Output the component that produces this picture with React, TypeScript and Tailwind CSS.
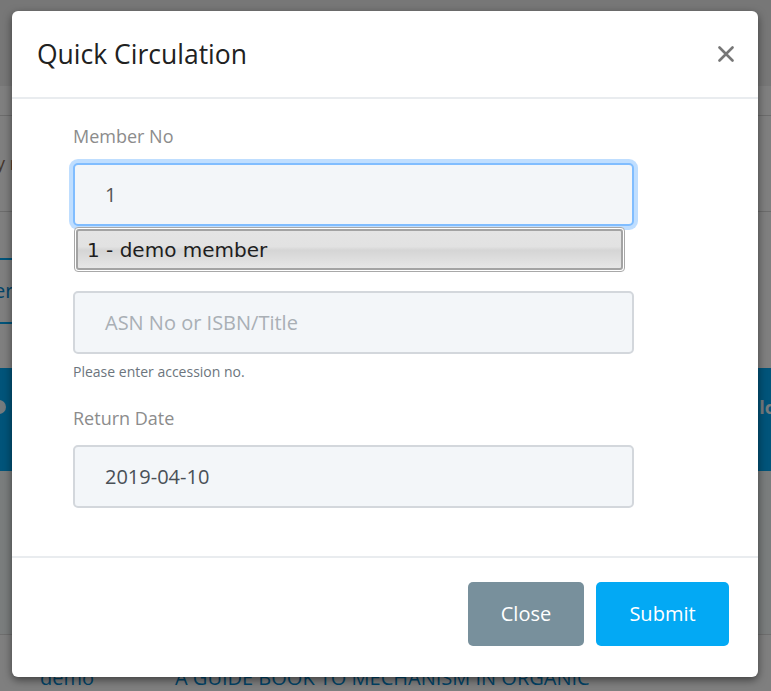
export default function App() {
  return (
    <div className="relative h-[691px] w-[771px] overflow-hidden bg-white font-['Open_Sans',sans-serif]">
      {/* page behind the dialog */}
      <div className="h-[86px] bg-[#eeeeee]" />
      <div className="h-[30px] border-b border-[#d8d8d8]" />
      <div className="flex h-[96px] items-center border-b border-[#d8d8d8]">
        <span className="-ml-[4px] text-[18px] text-[#8a6d5a]">y r</span>
      </div>
      <div className="h-[46px]" />
      <div className="w-[36px] border-y-2 border-[#03a9f4] py-[16px]">
        <span className="-ml-[6px] text-[20px] text-[#0288d1]">er</span>
      </div>
      <div className="h-[44px]" />
      <div className="flex h-[103px] items-start justify-between bg-[#03a9f4] pt-[26px] text-[18px] font-bold text-[#eaf6fd]">
        <span className="-ml-[8px] mt-[6px] h-[14px] w-[14px] rounded-full bg-[#eaf6fd]" />
        <span className="-mr-[5px]">lo</span>
      </div>
      <div className="h-[164px] border-b border-[#dcdcdc] bg-[#f4fafa]" />
      <div className="flex pl-[40px] pt-[28px] text-[20px] uppercase text-[#0288d1]">
        <span className="w-[135px] normal-case">demo</span>
        <span>A guide book to mechanism in organic</span>
      </div>

      {/* backdrop */}
      <div className="absolute inset-0 bg-black/50" />

      {/* dialog */}
      <div className="absolute left-[12px] top-[11px] w-[746px] rounded-[6px] bg-white shadow-[0_3px_9px_rgba(0,0,0,0.5)]">
        <div className="flex h-[88px] items-center justify-between border-b-2 border-[#e9ecef] px-[25px]">
          <h1 className="text-[26.5px] leading-none text-[#212121]">Quick Circulation</h1>
          <svg width="16" height="16" viewBox="0 0 16 16" className="mr-[-1px]">
            <path d="M1.5 1.5L14.5 14.5M14.5 1.5L1.5 14.5" stroke="#777" strokeWidth="2.6" strokeLinecap="round" />
          </svg>
        </div>

        <div className="px-[61px] pb-[48px] pt-[24px]">
          <label className="block text-[18px] leading-[27px] text-[#8c8c8c]">Member No</label>
          <div className="relative mt-[13px] w-[561px]">
            <div className="flex h-[63px] items-center rounded-[5px] border-2 border-[#80bdff] bg-[#f3f6f9] pl-[30px] text-[20px] text-[#555] shadow-[0_0_0_4px_rgba(0,123,255,0.25)]">
              1
            </div>
            <div className="absolute left-[1px] top-[64px] w-[551px] rounded-[4px] border border-[#a8a8a8] bg-white p-px">
              <div className="flex h-[41px] items-center rounded-[3px] border-2 border-[#a3a3a3] bg-[linear-gradient(to_bottom,#e4e4e4_0%,#e2e2e2_42%,#d5d5d5_52%,#e6e6e6_100%)] pl-[9px] font-['DejaVu_Sans',sans-serif] text-[20px] text-[#1e1e1e]">
                1 - demo member
              </div>
            </div>
          </div>

          <div className="mt-[65px] flex h-[63px] w-[561px] items-center rounded-[5px] border-2 border-[#d3d7dc] bg-[#f3f6f9] pl-[30px] text-[20px] text-[#a9afb5]">
            ASN No or ISBN/Title
          </div>
          <p className="mt-[7px] text-[14px] leading-[21px] text-[#6c757d]">Please enter accession no.</p>

          <label className="mt-[23px] block text-[18px] leading-[27px] text-[#8c8c8c]">Return Date</label>
          <div className="mt-[13px] flex h-[63px] w-[561px] items-center rounded-[5px] border-2 border-[#d3d7dc] bg-[#f3f6f9] pl-[30px] text-[20px] text-[#495057]">
            2019-04-10
          </div>
        </div>

        <div className="flex justify-end gap-[12px] border-t-2 border-[#e9ecef] pb-[31px] pr-[29px] pt-[24px]">
          <button className="h-[64px] w-[116px] rounded-[5px] bg-[#78909c] text-[20px] text-white">Close</button>
          <button className="h-[64px] w-[133px] rounded-[5px] bg-[#03a9f4] text-[20px] text-white">Submit</button>
        </div>
      </div>
    </div>
  );
}
